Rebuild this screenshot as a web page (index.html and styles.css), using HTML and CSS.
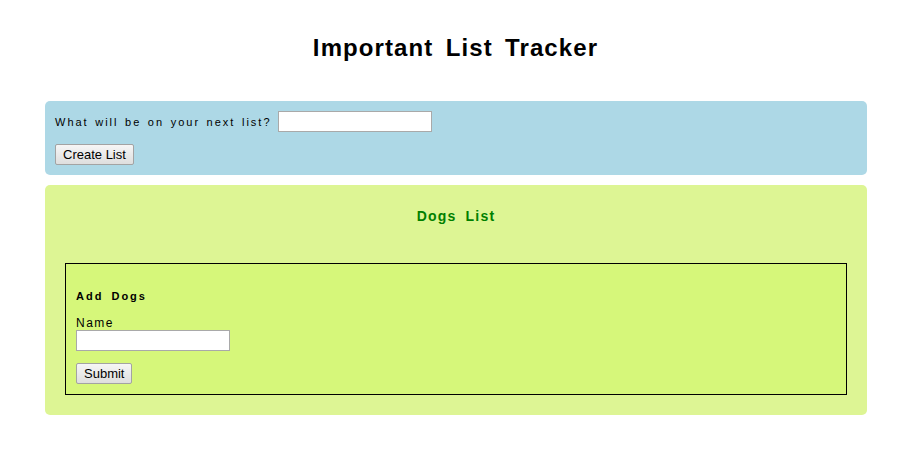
FILE: index.html
```html
<!DOCTYPE html>
<html>
<head>
<meta charset="utf-8">
<link rel="stylesheet" href="styles.css">
</head>
<body>
<h1 class="title">Important List Tracker</h1>
<div class="wrap">
  <form class="create-box">
    <div class="row">
      <label class="create-label" for="next">What will be on your next list?</label>
      <input class="text-input" id="next" type="text">
    </div>
    <button class="btn" type="button">Create List</button>
  </form>
  <section class="list-box">
    <h2 class="list-title">Dogs List</h2>
    <div class="add-box">
      <h4 class="add-title">Add Dogs</h4>
      <label class="name-label" for="name">Name</label>
      <input class="text-input" id="name" type="text">
      <button class="btn submit" type="button">Submit</button>
    </div>
  </section>
</div>
</body>
</html>
```
FILE: styles.css
```css
html, body {
  margin: 0;
  padding: 0;
  background: #fff;
  font-family: "Liberation Sans", Arial, sans-serif;
  color: #000;
}
.title {
  margin: 34px 0 39px;
  font-size: 24px;
  line-height: 28px;
  font-weight: bold;
  text-align: center;
  letter-spacing: 1.1px;
  word-spacing: 4.5px;
  padding-left: 3px;
}
.wrap {
  margin: 0 41px 0 45px;
  display: flex;
  flex-direction: column;
  gap: 10px;
}
.create-box {
  margin: 0;
  background: #add8e6;
  border-radius: 5px;
  padding: 10px;
  display: flex;
  flex-direction: column;
  align-items: flex-start;
  gap: 12px;
}
.row {
  display: flex;
  align-items: center;
  gap: 6px;
}
.create-label {
  font-size: 11px;
  letter-spacing: 2px;
  word-spacing: 1.5px;
}
.text-input {
  box-sizing: border-box;
  width: 154px;
  height: 21px;
  border: 1px solid #a9a9a9;
  background: #fff;
  padding: 1px 2px;
  margin: 0;
  font-family: "Liberation Sans", Arial, sans-serif;
  font-size: 13px;
}
.btn {
  box-sizing: border-box;
  height: 21px;
  margin: 0;
  padding: 0 7px;
  font-family: "Liberation Sans", Arial, sans-serif;
  font-size: 13px;
  color: #000;
  border: 1px solid #a3a3a3;
  border-radius: 2px;
  background: linear-gradient(#f6f6f6, #dedede);
}
.list-box {
  background: #ddf594;
  border-radius: 5px;
  padding: 20px;
}
.list-title {
  margin: 1px 0 37px;
  font-size: 14px;
  line-height: 20px;
  color: #008000;
  text-align: center;
  letter-spacing: 1.2px;
  word-spacing: 4px;
}
.add-box {
  border: 1px solid #000;
  background: #d6f77a;
  padding: 10px;
  display: flex;
  flex-direction: column;
  align-items: flex-start;
}
.add-title {
  margin: 15px 0 13px;
  font-size: 11px;
  line-height: 14px;
  font-weight: bold;
  letter-spacing: 2px;
  word-spacing: 3px;
}
.name-label {
  font-size: 12px;
  line-height: 14px;
  letter-spacing: 1.5px;
}
.submit {
  margin-top: 12px;
  padding: 0 7px;
}
```
